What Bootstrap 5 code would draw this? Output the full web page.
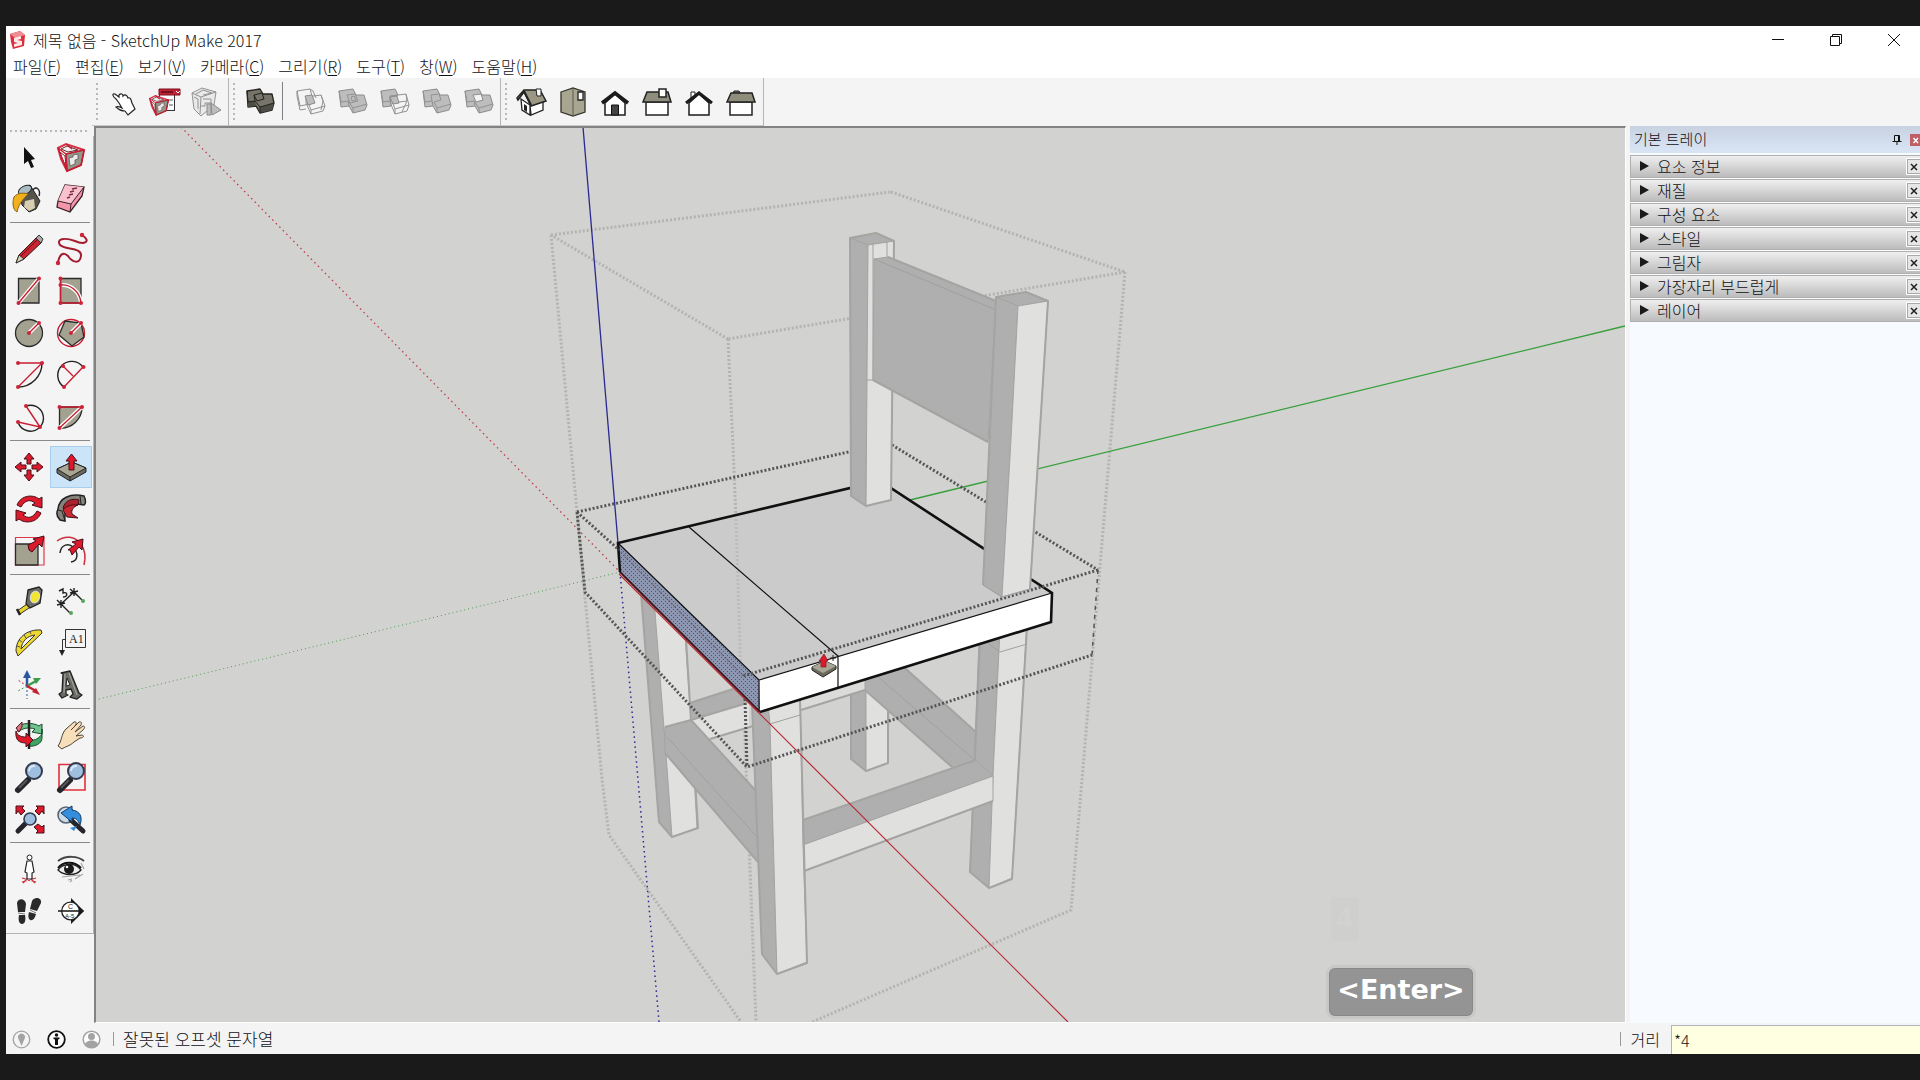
<!DOCTYPE html>
<html lang="ko">
<head>
<meta charset="utf-8">
<meta name="viewport" content="width=device-width, initial-scale=1">
<title>제목 없음 - SketchUp Make 2017</title>
<link href="https://cdn.jsdelivr.net/npm/bootstrap@5.3.0/dist/css/bootstrap.min.css" rel="stylesheet">
<style>
  body { background: #1a1a1a; font-family: "Noto Sans CJK KR", "Noto Sans", sans-serif; font-size: 16px; font-weight: 300; line-height: 24px; color: #101014; padding: 26px 0 26px 6px; }
  button { font: inherit; color: inherit; background: none; border: 0; padding: 0; }
  svg { display: block; }
  .app-window { background: #f4f4f4; }
  .title-row { height: 28px; padding-left: 3px; gap: 6px; }
  .win-btn { width: 58px; height: 28px; }
  .win-btn svg { margin: auto; }
  .win-controls { margin-right: -3px; }
  .menu-row { height: 24px; }
  .menu-row button { padding: 0 7px; }
  .menu-row u { text-underline-offset: 2px; }
  .tool-row { height: 48px; padding-left: 86px; }
  .tool-group { border-right: 1px solid #b4b4b4; border-bottom: 1px solid #c9c9c9; padding: 3px 1px 0 9px; position: relative; }
  .tool-group::before { content: ""; position: absolute; left: 4px; top: 5px; bottom: 3px; width: 2px; background: repeating-linear-gradient(#b9b9b9 0 2px, transparent 2px 5px); }
  .tool-btn { width: 42px; height: 42px; flex: none; }
  .tool-btn.is-on { background: #cce4f8; outline: 1px solid #a9cdec; outline-offset: -1px; }
  .v-rule { width: 7px; height: 38px; border-left: 1px solid #808080; margin: 1px 0 0 2px; }
  .side-tools { width: 88px; padding-top: 10px; position: relative; }
  .side-box { padding: 0 1px 1px 2px; border-right: 1px solid #b4b4b4; border-bottom: 1px solid #b4b4b4; }
  .side-tools::before { content: ""; position: absolute; left: 4px; right: 4px; top: 4px; height: 2px; background: repeating-linear-gradient(90deg, #b9b9b9 0 2px, transparent 2px 5px); }
  .h-rule { width: 80px; height: 8px; margin-left: 2px; background: linear-gradient(#8a8a8a, #8a8a8a) 0 2px / 100% 1px no-repeat; }
  .viewport3d { background: #d2d2d0; border: 1px solid #fff; border-left: 2px solid #828282; border-top: 2px solid #828282; position: relative; }
  .viewport3d > svg { position: absolute; inset: 0; width: 100%; height: 100%; }
  .key-pop { position: absolute; right: 153px; bottom: 7px; height: 46px; width: 142px; line-height: 42px; border-radius: 5px; background: #949494; box-shadow: 0 0 0 1px #888, 0 0 0 4px #c8c8c7; color: #fff; font-family: "DejaVu Sans", sans-serif; font-weight: 700; font-size: 27px; text-align: center; }
  .key-ghost { position: absolute; right: 266px; bottom: 81px; width: 28px; height: 44px; line-height: 44px; border-radius: 3px; background: #cfcfcd; color: #d2d2d0; font-family: "DejaVu Sans", sans-serif; font-weight: 700; font-size: 26px; text-align: center; }
  .tray { width: 290px; margin-left: 4px; background: #f7faff; }
  .tray-head { height: 27px; padding-left: 4px; font-size: 15px; background: linear-gradient(#c8d2e1, #d9e5f5); margin-bottom: 2px; }
  .tray-head span { padding-bottom: 1px; }
  .pin-btn { width: 12px; margin-right: 7px; }
  .tray-x { width: 12px; height: 12px; margin-right: -2px; background: #c06066; }
  .tray-item { height: 23px; margin-bottom: 1px; padding-left: 9px; border: 1px solid #b0b0b0; border-right: 0; background: linear-gradient(#efefef, #bcbcbc); }
  .tray-item > button:first-child { height: 20px; line-height: 20px; }
  .item-arrow { width: 17px; height: 10px; }
  .item-x { width: 17px; height: 17px; margin: 2px -3px 0 0; border: 1px solid #fff; outline: 1px solid #a9a9a9; outline-offset: -2px; background: #e6e6e6; }
  .status-row { height: 31px; font-size: 17px; padding: 1px 0 0 6px; }
  .status-row .btn-ico { width: 19px; height: 19px; margin-right: 16px; }
  .status-rule { width: 1px; height: 14px; background: #999; }
  .status-rule.at-left { margin: 0 9px 0 -4px; }
  .measure-box { width: 249px; height: 29px; border: 1px solid #b0b4bc; border-right: 0; border-bottom: 0; background: #ffffe1; border-radius: 0; padding: 0 2px; font-size: 16px; font-weight: 300; color: #111; outline: 0; }
  .measure-lab { font-size: 16px; margin: 0 11px 0 10px; }
  .r { fill: none; stroke: #c81e32; stroke-width: 1.4; }
  .k { fill: none; stroke: #222; stroke-width: 1.4; }
  .rd { fill: #cc2336; }
  .arw { fill: #dd1a2b; stroke: #46101a; stroke-width: 1; }
  .tan { fill: #a3a18f; stroke: #2a2a2a; stroke-width: 1.3; }
  .gs { fill: #bdbdbd; stroke: #8c8c8c; stroke-width: 1; stroke-linejoin: round; }
  .gl { fill: none; stroke: #929292; stroke-width: 1; stroke-linejoin: round; }
  .md { fill: #afafaf; stroke: #a4a4a2; stroke-width: 1; stroke-linejoin: round; }
  .ml { fill: #e0e0df; stroke: #a4a4a2; stroke-width: 1; stroke-linejoin: round; }
  .sil { fill: none; stroke: #a4a4a2; stroke-width: 2; stroke-linejoin: round; }
  .thin { fill: none; stroke: #a0a09e; stroke-width: 1; }
  .bbo { fill: none; stroke: #b3b3b1; stroke-width: 3; stroke-dasharray: 2 2; }
  .bbi { fill: none; stroke: #555; stroke-width: 3; stroke-dasharray: 2 2; }
</style>
<script src="https://cdn.jsdelivr.net/npm/bootstrap@5.3.0/dist/js/bootstrap.bundle.min.js"></script>
</head>
<body class="vh-100 overflow-hidden">
<svg width="0" height="0" class="position-absolute" aria-hidden="true">
  <defs>
    <symbol id="cube-red" viewBox="0 0 42 42">
      <path d="M8 12L16 8L34 14L31 29L17 35L11 23Z" fill="#fff" stroke="#d93246" stroke-width="2"/>
      <path d="M16 18L34 14L31 29L17 35Z" fill="#98958a" stroke="#4b1a22" stroke-width="1"/>
      <path d="M11 13L17 10L28 14L18 16Z" fill="#efefef" stroke="#6a2a30"/>
      <path d="M10 16L15 20L16 31L12 22Z" fill="#fff" stroke="#6a2a30"/>
      <path d="M8 12L16 18L34 14M16 18L17 35M16 8L22 13" class="r"/>
      <path d="M8 12L17 35L31 29L34 14" class="r"/>
      <path d="M19 22l4-1v-2l5-1v5l-3 1v4l-5 2z" fill="#e9e9e9" stroke="#5b5b5b" stroke-width=".8"/>
    </symbol>
    <symbol id="loupe" viewBox="0 0 42 42">
      <path d="M10 34L20 24" stroke="#26262a" stroke-width="6" stroke-linecap="round"/><path d="M11 32L19 24" stroke="#55555b" stroke-width="2"/>
      <circle cx="26" cy="15" r="8" fill="#9fbfe0" stroke="#333a4c" stroke-width="2"/><path d="M21 15a5 5 0 0 1 6-5" fill="none" stroke="#dce9f6" stroke-width="2"/>
    </symbol>
  </defs>
</svg>

<div class="app-window h-100 d-flex flex-column">
  <header class="bg-white">
    <div class="title-row d-flex align-items-center">
      <svg width="18" height="20" viewBox="0 0 18 20" aria-hidden="true"><path d="M1 4L11 1L16 5L15 16L4 19L2 12Z" fill="#dd2f3c"/><path d="M1 4L11 1L16 5L6 8Z" fill="#ee8d92"/><path d="M5 8L12 6V9L8 10L13 11V15L5 17V14L9 13L5 12Z" fill="#fff" opacity=".9"/></svg>
      <span>제목 없음 - SketchUp Make 2017</span>
      <div class="win-controls ms-auto d-flex">
        <button class="win-btn" aria-label="최소화"><svg width="12" height="12"><path d="M0 5.500H12" stroke="#111"/></svg></button>
        <button class="win-btn" aria-label="이전 크기로"><svg width="12" height="12"><path d="M.5 2.500H9.500V11.500H.5ZM2.500 2.500V.5H11.500V9.500H9.500" fill="none" stroke="#111"/></svg></button>
        <button class="win-btn" aria-label="닫기"><svg width="12" height="12"><path d="M0 0L12 12M12 0L0 12" stroke="#111"/></svg></button>
      </div>
    </div>
    <nav class="menu-row d-flex">
      <button>파일(<u>F</u>)</button><button>편집(<u>E</u>)</button><button>보기(<u>V</u>)</button><button>카메라(<u>C</u>)</button><button>그리기(<u>R</u>)</button><button>도구(<u>T</u>)</button><button>창(<u>W</u>)</button><button>도움말(<u>H</u>)</button>
    </nav>
  </header>

  <div class="tool-row d-flex" role="toolbar">
    <div class="tool-group d-flex">
      <button class="tool-btn" aria-label="손"><svg width="42" height="42"><path d="M15 18C11 15 11 12 14 13L18 16V14C20 12 22 13 22 15C24 13 26 14 27 17C29 16 30 18 31 22L34 28L27 34L24 30C20 30 17 28 15 26C17 25 19 26 21 27L18 22Z" fill="#fff" stroke="#222" stroke-width="1.200"/></svg></button>
      <button class="tool-btn" aria-label="3D 웨어하우스"><svg width="42" height="42"><rect x="16.500" y="8.500" width="15" height="21" fill="#fff" stroke="#333"/><path d="M16 8H37V14H16Z" fill="#c12236" stroke="#7d1020"/><path d="M18 11H30" stroke="#5c0b18" stroke-width="1.500"/><path d="M33 10l2 2l2-2" stroke="#fff" fill="none"/><path d="M25 19h5M26 24h4" stroke="#555"/><use href="#cube-red" x="1" y="9" width="30" height="30"/></svg></button>
      <button class="tool-btn" aria-label="확장 웨어하우스"><svg width="42" height="42"><g class="gl"><path d="M7 12L17 7L31 11L29 24L16 35L9 28Z" fill="#e9e9e9"/><path d="M7 12L16 16L31 11M16 16L15 33M11 13L18 9L27 12L18 14M9 16L13 18L13 28M18 18H26V22H20V25H15"/></g><path d="M22 23H26V34H22ZM26 22L36 29L27 34Z" class="gs"/></svg></button>
    </div>
    <div class="tool-group d-flex">
      <button class="tool-btn" aria-label="외부 셸"><svg width="42" height="42"><path d="M9 10L22 8L25 13L34 13L36 22L34 29L22 32L18 25L10 26Z" fill="#77756a" stroke="#23231f" stroke-width="1.300" stroke-linejoin="round"/><path d="M10 21L17 20L18 25L10 26ZM22 26L36 22L34 29L22 32Z" fill="#4e4d45"/><path d="M9 10L10 21L17 20M16 14L24 12L26 18L19 20ZM17 20L22 26L36 22M22 26V32M16 14L17 20" fill="none" stroke="#23231f"/></svg></button>
      <span class="v-rule"></span>
      <button class="tool-btn" aria-label="교차"><svg width="42" height="42"><g class="gl"><path d="M8 10L21 8L25 22L11 25ZM8 10V15L11 29L17 28M21 8L24 10L27 17M17 16L32 14L36 25L22 29ZM36 25L34 30L22 33V29M17 16V22L22 33M32 14L34 20L32 29"/></g><path d="M16 15L23 14L26 22L19 24Z" class="gs"/></svg></button>
      <button class="tool-btn" aria-label="결합"><svg width="42" height="42"><path d="M8 10L22 8L25 14L33 14L36 24L34 29L22 32L18 25L10 26Z" class="gs"/><path d="M8 10L10 21L17 20M17 20L22 27L36 23M22 27V32M16 14L24 13L27 20L19 22ZM20 16L23 15L25 19L21 20ZM17 20L18 25" class="gl"/></svg></button>
      <button class="tool-btn" aria-label="빼기"><svg width="42" height="42"><path d="M8 10L22 8L25 14L17 16L18 25L10 26Z" class="gs"/><path d="M8 10L10 21L17 20M17 15L33 13L36 24L22 28ZM22 28V33L34 30L36 24M17 15V21L22 33M33 13L34 20L29 31M18 22L34 20" class="gl"/><path d="M17 16L24 15L26 22L20 23Z" class="gs"/></svg></button>
      <button class="tool-btn" aria-label="자르기"><svg width="42" height="42"><path d="M8 10L22 8L25 14L33 14L36 24L34 29L22 32L18 25L10 26Z" class="gs"/><path d="M8 10L10 21L17 20M16 14L24 13L26 19L19 21L22 27L36 23M22 27V32M16 14L17 20L18 25" class="gl"/></svg></button>
      <button class="tool-btn" aria-label="분할"><svg width="42" height="42"><path d="M8 10L22 8L25 14L33 14L36 24L34 29L22 32L18 25L10 26Z" class="gs"/><path d="M8 10L10 21L17 20L22 27L36 23M22 27V32M17 20L18 25" class="gl"/><path d="M16 14L24 13L26 19L19 21Z" fill="#f4f4f4" stroke="#8c8c8c"/></svg></button>
    </div>
    <div class="tool-group d-flex">
      <button class="tool-btn" aria-label="아이소"><svg width="42" height="42"><path d="M11 18L20 24V34L12 29ZM20 24L33 20V29L21 34Z" fill="#fff" stroke="#222" stroke-width="1.300"/><path d="M7 17L14 9L30 9L36 20L21 25L14 11L8 19Z" fill="#9a9885" stroke="#222" stroke-width="1.500"/><path d="M14 10L21 24" stroke="#222" stroke-width="2"/><path d="M26 8H31V15H27Z" fill="#fff" stroke="#222"/><path d="M14 23L17 25V31L14 29Z" fill="#222"/></svg></button>
      <button class="tool-btn" aria-label="위"><svg width="42" height="42"><path d="M9 11L21 7L33 11V31L21 35L9 31Z" fill="#a8a690" stroke="#33332c" stroke-width="1.300"/><path d="M21 8V35" stroke="#5a5a4d"/><path d="M26 11H31V19H26Z" fill="#fff" stroke="#222" stroke-width="1.300"/></svg></button>
      <button class="tool-btn" aria-label="앞"><svg width="42" height="42"><path d="M11 22V34H31V22L21 13Z" fill="#fff" stroke="#1b1b1b" stroke-width="1.500"/><path d="M8 22L21 12L34 22" fill="none" stroke="#1b1b1b" stroke-width="3.500"/><path d="M17.500 24H24.500V34H17.500Z" fill="#444" stroke="#111"/></svg></button>
      <button class="tool-btn" aria-label="오른쪽"><svg width="42" height="42"><path d="M10 21H32V34H10Z" fill="#fff" stroke="#222" stroke-width="1.500"/><path d="M11 11H32L35 21H7Z" fill="#8f8d7c" stroke="#222" stroke-width="1.500"/><path d="M23 8H30V16H23Z" fill="#fff" stroke="#222" stroke-width="1.500"/></svg></button>
      <button class="tool-btn" aria-label="뒤"><svg width="42" height="42"><path d="M13 18V11H17V15" fill="#fff" stroke="#222"/><path d="M11 22V34H31V22L21 13Z" fill="#fff" stroke="#1b1b1b" stroke-width="1.500"/><path d="M8 22L21 12L34 22" fill="none" stroke="#1b1b1b" stroke-width="3"/></svg></button>
      <button class="tool-btn" aria-label="왼쪽"><svg width="42" height="42"><path d="M13 12L14 10H19L20 12" fill="#777" stroke="#222"/><path d="M10 21H32V34H10Z" fill="#fff" stroke="#222" stroke-width="1.500"/><path d="M11 12H32L35 21H7Z" fill="#8f8d7c" stroke="#222" stroke-width="1.500"/></svg></button>
    </div>
  </div>

  <div class="flex-grow-1 d-flex overflow-hidden">
    <aside class="side-tools flex-shrink-0">
      <div class="side-box d-flex flex-wrap" role="toolbar">
        <button class="tool-btn" aria-label="선택"><svg width="42" height="42"><path d="M16 11V28L20 25L23 32L26 31L23 24L27 23Z" fill="#111"/></svg></button>
        <button class="tool-btn" aria-label="구성 요소 만들기"><svg width="42" height="42"><use href="#cube-red" width="42" height="42"/></svg></button>
        <button class="tool-btn" aria-label="페인트통"><svg width="42" height="42"><path d="M11 13L22 7L32 23L28 31L21 34L14 27Z" fill="#55534b" stroke="#222"/><ellipse cx="17" cy="12" rx="7" ry="4" transform="rotate(-25 17 12)" fill="#a9bcc0" stroke="#222"/><path d="M17 23L26 21L27 30L21 33L16 29Z" fill="#d8cfb2"/><path d="M25 12C28 7 33 12 31 18" class="k"/><path d="M6 19C10 14 17 15 20 16C17 20 11 24 9 34C5 32 4 25 6 19Z" fill="#f2b01e" stroke="#8a6414"/></svg></button>
        <button class="tool-btn" aria-label="지우개"><svg width="42" height="42"><path d="M15 7L34 9L32 18L20 34L7 29L8 23Z" fill="#f595ac" stroke="#3a2227" stroke-width="1.300"/><path d="M15 7L34 9L21 26L8 23Z" fill="#f9c0cd"/><path d="M8 23L21 26L34 9M21 26L20 34" fill="none" stroke="#3a2227"/><path d="M17 20l3-1M19 17l4-1M20 14l4-1M22 11l5-1" stroke="#7c2c42" stroke-width="1.500"/></svg></button>
        <span class="h-rule"></span>
        <button class="tool-btn" aria-label="선"><svg width="42" height="42"><path d="M8 35L11 27L28 10L34 14L16 31Z" fill="#c9242f" stroke="#33181b"/><path d="M8 35L11 27L16 31Z" fill="#d8d2b4" stroke="#333"/><path d="M28 10L31 7L35 11L33 15Z" fill="#aaa" stroke="#333"/><path d="M13 28L29 12" stroke="#6d0f19"/></svg></button>
        <button class="tool-btn" aria-label="자유곡선"><svg width="42" height="42"><path d="M32 7C42 14 34 17 25 13C14 9 6 11 10 17C15 22 32 19 31 28C30 37 22 34 18 28C13 23 9 27 8 35" fill="none" stroke="#a31c2e" stroke-width="2"/><circle cx="32" cy="7" r="2.200" class="rd"/><circle cx="8" cy="35" r="2.200" class="rd"/></svg></button>
        <button class="tool-btn" aria-label="직사각형"><svg width="42" height="42"><path d="M10.500 8.500H31V33H10.500Z" class="tan"/><path d="M10.500 33L31 8.500" stroke="#fff" stroke-width="4"/><path d="M10.500 33L31 8.500" class="r"/><circle cx="10.500" cy="33" r="2" class="rd"/><circle cx="31" cy="8.500" r="2" class="rd"/></svg></button>
        <button class="tool-btn" aria-label="회전된 직사각형"><svg width="42" height="42"><path d="M10.500 8.500H31V33H10.500Z" class="tan"/><path d="M10.500 15C21 14 30 22 31 33" stroke="#fff" stroke-width="4" fill="none"/><path d="M10.500 8.500V33H31C30 22 21 14 10.500 15" class="r"/><circle cx="10.500" cy="8.500" r="2" class="rd"/><circle cx="10.500" cy="15" r="2" class="rd"/><circle cx="10.500" cy="33" r="2" class="rd"/><circle cx="31" cy="33" r="2" class="rd"/></svg></button>
        <button class="tool-btn" aria-label="원"><svg width="42" height="42"><circle cx="21" cy="21" r="13.500" class="tan"/><path d="M21 21L31 11" stroke="#fff" stroke-width="4"/><path d="M21 21L31 11" class="r"/><circle cx="21" cy="21" r="2" class="rd"/><circle cx="31" cy="11" r="2" class="rd"/></svg></button>
        <button class="tool-btn" aria-label="다각형"><svg width="42" height="42"><circle cx="21" cy="21" r="13.500" class="r"/><path d="M31 11L34 25L22 34L9 23L15 9Z" class="tan"/><path d="M21 21L31 11" stroke="#fff" stroke-width="4"/><path d="M21 21L31 11" class="r"/><circle cx="21" cy="21" r="2" class="rd"/><circle cx="31" cy="11" r="2" class="rd"/></svg></button>
        <button class="tool-btn" aria-label="호"><svg width="42" height="42"><path d="M34 9A24 24 0 0 1 10 33" class="k"/><path d="M10 9H34L10 33" class="r"/><circle cx="10" cy="9" r="2" class="rd"/><circle cx="34" cy="9" r="2" class="rd"/><circle cx="10" cy="33" r="2" class="rd"/></svg></button>
        <button class="tool-btn" aria-label="2점 호"><svg width="42" height="42"><path d="M14 33A14 14 0 1 1 33 13" class="k"/><path d="M14 33L33 13M13 12L23 22" class="r"/><circle cx="13" cy="12" r="2" class="rd"/><circle cx="33.500" cy="13" r="2" class="rd"/><circle cx="14" cy="33" r="2" class="rd"/></svg></button>
        <button class="tool-btn" aria-label="3점 호"><svg width="42" height="42"><path d="M18 10A13 13 0 1 1 10 26" class="k"/><path d="M18 10L32 31L10 26" class="r"/><circle cx="18" cy="10" r="2" class="rd"/><circle cx="32" cy="31" r="2" class="rd"/><circle cx="10" cy="26" r="2" class="rd"/></svg></button>
        <button class="tool-btn" aria-label="파이"><svg width="42" height="42"><path d="M9.500 11H32A21 21 0 0 1 9.500 32Z" class="tan"/><path d="M9.500 32L32 11" stroke="#fff" stroke-width="4"/><path d="M9.500 32L32 11H9.500" class="r"/><circle cx="9.500" cy="11" r="2" class="rd"/><circle cx="32" cy="11" r="2" class="rd"/><circle cx="9.500" cy="32" r="2" class="rd"/></svg></button>
        <span class="h-rule"></span>
        <button class="tool-btn" aria-label="이동"><svg width="42" height="42"><path d="M21 7L26 13H23V18H19V13H16ZM21 35L26 29H23V24H19V29H16ZM7 21L13 16V19H18V23H13V26ZM35 21L29 16V19H24V23H29V26Z" class="arw"/></svg></button>
        <button class="tool-btn is-on" aria-label="밀기/끌기" aria-pressed="true"><svg width="42" height="42"><path d="M7 23L22 16L36 22V26L20 35L7 27Z" fill="#6b6a60" stroke="#222"/><path d="M7 23L22 16L36 22L20 31Z" fill="#a8a695" stroke="#222"/><path d="M20 31V35" stroke="#222"/><path d="M21.500 8L27 15H24V24H19V15H16Z" class="arw"/></svg></button>
        <button class="tool-btn" aria-label="회전"><svg width="42" height="42"><path d="M9 17C13 7 25 6 31 11L34 9L34 20L24 17L27 15C22 11 17 12 13 19ZM33 25C29 35 17 36 11 31L8 33L8 22L18 25L15 27C20 31 25 30 29 23Z" class="arw"/></svg></button>
        <button class="tool-btn" aria-label="따라가기"><svg width="42" height="42"><path d="M8 21C9 10 20 5 34 8C36 12 36 16 34 17L27 16C18 17 14 23 15 33L10 32C7 29 6 25 8 21Z" fill="#85837a" stroke="#222" stroke-width="1.500"/><path d="M13 20C15 12 23 10 29 12L28 17L19 19L17 24Z" fill="#aa222e" stroke="#42121a"/><path d="M13 22L17 29L28 30L22 26C21 22 23 19 28 17C20 16 15 19 13 22Z" fill="#cc2834" stroke="#42121a"/><path d="M8 22L12 23L15 33M30 8L31 16" fill="none" stroke="#222"/></svg></button>
        <button class="tool-btn" aria-label="배율"><svg width="42" height="42"><path d="M7.500 7.500H36V35H7.500Z" fill="none" stroke="#dd3a49" stroke-width="1.200"/><path d="M7.500 14H30V35H7.500Z" class="tan"/><path d="M36 6L34 17L31 14L24 22L21 20L20 15L28 11L25 9Z" class="arw"/></svg></button>
        <button class="tool-btn" aria-label="오프셋"><svg width="42" height="42"><path d="M7 11C15 5 25 6 31 14C35 20 36 27 34 35" fill="none" stroke="#c9303f" stroke-width="1.500"/><path d="M10 23C11 14 19 13 23 17C29 23 28 31 21 32" class="k"/><path d="M33 9L32 20L29 17L22 25L20 20L18 20L26 14L22 12Z" class="arw"/></svg></button>
        <span class="h-rule"></span>
        <button class="tool-btn" aria-label="줄자"><svg width="42" height="42"><path d="M9 31L22 22L24 26L12 34Z" fill="#e8d32c" stroke="#333"/><path d="M9 29L12 35" stroke="#222" stroke-width="2.500"/><path d="M20 10L31 7L34 10L32 23L22 28L18 24Z" fill="#6c6c68" stroke="#222" stroke-width="1.300"/><ellipse cx="27" cy="17" rx="4.500" ry="6" transform="rotate(20 27 17)" fill="#f1e52f" stroke="#ddd"/></svg></button>
        <button class="tool-btn" aria-label="치수"><svg width="42" height="42"><path d="M11 24L24 12L33 21M11 24L20 33M20 9L28 16M24 8V16M7 20L15 28M11 20V28M20 13L28 11M7 25L15 23" class="k" stroke-width="1"/><circle cx="33" cy="21" r="2" fill="#58a45b"/><circle cx="21" cy="33" r="2" fill="#58a45b"/><path d="M9 11L13 9V13C18 11 18 17 13 17" class="k"/></svg></button>
        <button class="tool-btn" aria-label="각도기"><svg width="42" height="42"><path d="M10 34L8 29C8 16 19 7 33 8L34 11Z" fill="#eed72f" stroke="#333" stroke-linejoin="round"/><path d="M13 27C14 19 19 14 27 13Z" fill="#f4f4f4" stroke="#333"/><path d="M9 24l3 1M11 18l3 2M16 13l2 3M22 10l1 2" stroke="#555"/></svg></button>
        <button class="tool-btn" aria-label="텍스트"><svg width="42" height="42"><path d="M15.500 7.500H35.500V25.500H15.500ZM15.500 17.500H12.500V30" fill="none" stroke="#333"/><path d="M9 28H15L12 34Z" fill="#222"/><text x="19" y="21" font-family="Liberation Serif, serif" font-size="12" font-weight="400" fill="#222">A1</text></svg></button>
        <button class="tool-btn" aria-label="축"><svg width="42" height="42"><path d="M19 22V12" stroke="#2b57a0" stroke-width="2.500"/><path d="M15 14L19 6L23 14Z" fill="#2b57a0"/><path d="M19 22L28 17" stroke="#3f9b4c" stroke-width="2.500"/><path d="M25 14L33 14L28 20Z" fill="#3f9b4c"/><path d="M19 22L28 27" stroke="#c5222f" stroke-width="2.500"/><path d="M24 28L32 31L28 24Z" fill="#c5222f"/><path d="M19 22L10 27" stroke="#3f9b4c" stroke-dasharray="2 2"/><path d="M19 22V35" stroke="#2b57a0" stroke-dasharray="2 2"/><path d="M19 22L10 16" stroke="#c5222f" stroke-dasharray="2 2"/></svg></button>
        <button class="tool-btn" aria-label="3D 텍스트"><svg width="42" height="42"><path d="M9 30L12 28L13 10L11 9L20 7L29 29L32 31L27 35L20 33L23 30L21 25L16 26L16 30L18 31L12 34Z" fill="#6d6c64" stroke="#222" stroke-width="1.300" stroke-linejoin="round"/><path d="M17 14L20 21L16 22Z" fill="#f4f4f4" stroke="#222"/><path d="M15 10L14 29M19 9L27 31" stroke="#aaa" stroke-width="1"/></svg></button>
        <span class="h-rule"></span>
        <button class="tool-btn" aria-label="궤도"><svg width="42" height="42"><path d="M9 13C13 9 25 8 31 12L34 10V20L24 18L27 15C20 13 15 14 10 18Z" fill="#6fc48e" stroke="#1d4c30"/><path d="M34 15V24C34 30 26 33 21 32L22 26C27 27 31 24 34 20Z" fill="#3fa565" stroke="#1d4c30"/><path d="M8 14L14 8V13L11 18Z" fill="#d8727c" stroke="#5c1a22"/><path d="M21 6V35" stroke="#222" stroke-width="2.500"/><path d="M8 17C9 22 14 23 18 23V19L25 26L18 33V29C11 29 7 26 8 17Z" class="arw"/></svg></button>
        <button class="tool-btn" aria-label="팬"><svg width="42" height="42"><path d="M8 32C12 27 11 20 16 15L24 8C26 7 27 9 25 12L21 16L29 8C31 7 32 9 31 11L25 18L33 12C35 12 35 14 33 16L26 22L32 21C35 22 33 24 30 24L24 28C20 32 14 33 12 35Z" fill="#f6dfb9" stroke="#4d4233" stroke-width="1"/></svg></button>
        <button class="tool-btn" aria-label="확대/축소"><svg width="42" height="42"><use href="#loupe" width="42" height="42"/></svg></button>
        <button class="tool-btn" aria-label="확대/축소 창"><svg width="42" height="42"><path d="M9 8.500H35V34H9Z" fill="none" stroke="#e0303c" stroke-width="1.600"/><use href="#loupe" width="42" height="42"/></svg></button>
        <button class="tool-btn" aria-label="범위 확대/축소"><svg width="42" height="42"><path d="M10 33L17 26" stroke="#26262a" stroke-width="5" stroke-linecap="round"/><circle cx="22" cy="21" r="6" fill="#9fbfe0" stroke="#333a4c" stroke-width="1.600"/><path d="M8 8H16L14 10L17 13L13 17L10 13L8 16ZM36 8H28L30 10L27 13L31 17L34 13L36 16ZM36 35H28L30 33L26 29L30 26L34 29L36 27Z" class="arw"/></svg></button>
        <button class="tool-btn" aria-label="이전"><svg width="42" height="42"><circle cx="16" cy="17" r="8" fill="#c9dae8" stroke="#5b6775" stroke-width="1.600"/><path d="M21 22L33 33" stroke="#26262a" stroke-width="5" stroke-linecap="round"/><path d="M11 15L22 8V12C30 13 33 19 30 27C28 22 26 20 22 20V24Z" fill="#358dde" stroke="#133d68"/><path d="M20 30L27 28L24 33Z" fill="#358dde"/></svg></button>
        <span class="h-rule"></span>
        <button class="tool-btn" aria-label="카메라 위치"><svg width="42" height="42"><path d="M15 35L21 29L27 35M14 30L28 34M28 30L14 34" stroke="#d42b3a" fill="none" stroke-width="1.300"/><circle cx="21.500" cy="9.500" r="2.500" fill="#fff" stroke="#222"/><path d="M19 13H24L26 24L24 25V31H19V25L17 24Z" fill="#fff" stroke="#222" stroke-width="1.200"/></svg></button>
        <button class="tool-btn" aria-label="둘러보기"><svg width="42" height="42"><path d="M8 13C16 7 28 8 34 13" fill="none" stroke="#444" stroke-width="2"/><path d="M8 22C13 15 25 14 31 22C26 28 14 28 8 22Z" fill="#ededed" stroke="#222" stroke-width="1.300"/><path d="M8 20C13 13 25 13 31 20" fill="none" stroke="#111" stroke-width="2"/><circle cx="19" cy="21" r="5" fill="#1a1a1a"/><circle cx="17" cy="19" r="1.300" fill="#fff"/><path d="M12 29L30 27M18 32L22 31M25 31L33 26M20 34l2-2M31 15l3 6" stroke="#a5a5a5" stroke-width="1.200"/></svg></button>
        <button class="tool-btn" aria-label="이동 보기"><svg width="42" height="42"><path d="M9 13C10 8 17 8 18 14L17 22H10ZM11 25H17C18 30 17 34 14 34C11 34 10 30 11 25ZM22 19L24 11C27 6 34 8 33 13L29 21ZM21 22L28 24C27 28 25 31 22 30C20 28 20 26 21 22Z" fill="#2a2a2a"/><path d="M10 23L17 24M22 20L28 23" stroke="#777" stroke-width="1"/></svg></button>
        <button class="tool-btn" aria-label="단면"><svg width="42" height="42"><path d="M21 8L34 21L21 34V30L30 21L21 12Z" fill="#1a1a1a"/><circle cx="20.500" cy="21" r="8.800" fill="#fff" stroke="#222" stroke-width="1.300"/><path d="M8 21H33" stroke="#222" stroke-width="1.600"/><path d="M29 17L34 21L29 25Z" fill="#1a1a1a"/><text x="18" y="19" font-family="Liberation Sans, sans-serif" font-size="7" fill="#222">C</text><text x="15" y="28" font-family="Liberation Sans, sans-serif" font-size="6" fill="#222">A-5</text></svg></button>
      </div>
    </aside>

    <main class="viewport3d flex-grow-1 overflow-hidden">
      <svg viewBox="97 129 1529 894" preserveAspectRatio="xMinYMin slice" role="img" aria-label="의자 모델">
        <defs><pattern id="dots" width="4" height="4" patternUnits="userSpaceOnUse"><rect width="4" height="4" fill="#8e97b2"/><rect width="1" height="1" fill="#4a5379"/><rect x="2" y="2" width="1" height="1" fill="#4a5379"/></pattern></defs>
        <!-- outer bounding box -->
        <g class="bbo">
          <path d="M552 236L892 193"/><path d="M892 193L1126 273"/><path d="M1126 273L729 340"/><path d="M729 340L552 236"/>
          <path d="M552 236L578 513L603 780L610 836L742 1023"/><path d="M729 340L734 447L742 640L757 1023"/><path d="M1126 273L1105 520L1072 911L813 1023"/>
        </g>
        <!-- axes -->
        <g fill="none" stroke-width="1">
          <path d="M584 128L619 544" stroke="#2a2a93" stroke-width="1.300"/>
          <path d="M621 573L660 1023" stroke="#2a2a93" stroke-width="1.500" stroke-dasharray="1.500 3.500"/>
          <path d="M182 128L621 573" stroke="#c23c4a" stroke-width="1.300" stroke-dasharray="1.500 3.500"/>
          <path d="M96 701L621 573" stroke="#4d9a52" stroke-dasharray="1 3"/>
          <path d="M911 501L1626 327" stroke="#37a03c" stroke-width="1.300"/>
        </g>
        <!-- back leg -->
        <path class="md" d="M852 690L867 685V772L852 760Z"/><path class="ml" d="M867 685L890 700L889 764L867 772Z"/>
        <path class="sil" d="M852 690V760L867 772L889 764V700"/>
        <!-- right side rail -->
        <path d="M802 690L866 665V691L802 711Z" fill="#dbdbda"/><path class="sil" d="M802 711L866 691"/>
        <path class="md" d="M866 665L900 665L978 734L994 777L953 768L866 691Z"/>
        <path class="sil" d="M866 691L953 768M896 660L978 734"/><path class="thin" d="M870 670L994 777"/>
        <!-- back left leg -->
        <path class="md" d="M642 590L656 605L667 755L673 838L660 823Z"/>
        <path class="ml" d="M655 600L686 635L692 722L698 829L673 838L667 755Z"/>
        <path class="sil" d="M642 594L660 823L673 838L699 829L696 780M687 640L692 722"/>
        <!-- back rail -->
        <path class="md" d="M691 704L734 690L752 703L740 706L692 721Z"/>
        <path d="M692 721L750 703V728L711 740Z" fill="#e0e0df"/>
        <path class="sil" d="M691 704L734 690M692 721L745 705M711 740L754 727"/>
        <!-- left side rail -->
        <path class="md" d="M666 728L692 721L757 792L759 863L666 754Z"/>
        <path class="sil" d="M666 728L692 721L757 792M666 754L759 863"/><path class="thin" d="M668 738L758 838"/>
        <!-- front right leg -->
        <path class="md" d="M980 640L1001 630L994 777L990 889L971 873Z"/><path class="ml" d="M1001 630L1028 622L1013 879L990 889L994 777Z"/>
        <path class="sil" d="M981 640L971 873L990 889L1013 880L1028 628"/><path class="thin" d="M990 645L1001 653L1028 645"/>
        <!-- front rail -->
        <path class="md" d="M804 821L977 761L994 777L804 846Z"/><path class="ml" d="M804 846L994 777V802L805 872Z"/>
        <path class="sil" d="M804 821L977 761M805 872L994 802"/>
        <!-- front left leg -->
        <path class="md" d="M753 700L769 700L771 725L778 975L763 955Z"/><path class="ml" d="M769 705L801 695L804 846L808 963L778 975L771 725Z"/>
        <path class="sil" d="M753 704L763 955L778 975L808 964L801 700"/><path class="thin" d="M771 725L801 716"/>
        <!-- seat -->
        <path d="M619 544L881 482L1053 594L760 681Z" fill="#cbcbcb"/>
        <path d="M737 520L742 680" class="bbo" opacity=".6"/>
        <path d="M760 681L1053 594L1052 623L761 713Z" fill="#fff"/>
        <path d="M619 544L760 681L761 713L621 573Z" fill="url(#dots)"/>
        <path d="M690 528L839 657V688M760 681L1053 594M619 544L760 681V713" fill="none" stroke="#111" stroke-width="1.200"/>
        <path d="M621 573L619 544L881 482L1053 594L1052 623L761 713" fill="none" stroke="#111" stroke-width="2.600"/>
        <path d="M621 573L761 713" stroke="#421820" stroke-width="2"/>
        <path d="M620 575L761 715L1069 1023" stroke="#b92a35" stroke-width="1.200" fill="none"/>
        <!-- inner bounding box -->
        <g class="bbi">
          <path d="M578 513L881 446"/><path d="M893 446L1099 571"/><path d="M1099 571L744 677"/>
          <path d="M578 513L586 593L748 768L1093 656"/><path d="M578 513L619 550"/><path d="M746 700L748 768"/>
          <path d="M1099 571L1093 656" stroke-width="1.500" stroke-dasharray="4 5"/>
          <path d="M619 550L744 677" opacity=".5" stroke-width="2"/>
        </g>
        <!-- backrest and rear posts -->
        <path class="md" d="M851 239L877 234L895 242L869 246Z"/><path class="md" d="M851 239L869 246L867 507L852 497Z"/>
        <path class="ml" d="M869 246L895 242L892 501L867 507Z"/>
        <path class="sil" d="M852 497L851 239L877 234L895 242L892 501L867 507Z"/>
        <path class="thin" d="M874 245V381H868M888 243V258"/>
        <path class="md" d="M875 260L889 258L997 302L989 443L874 381Z"/>
        <path class="sil" d="M889 258L997 302M874 381L989 443"/><path class="thin" d="M875 260L995 310"/>
        <path class="md" d="M997 298L1027 293L1049 302L1019 307Z"/><path class="md" d="M997 298L1019 307L1012 440L1003 598L984 586L987 520Z"/>
        <path class="ml" d="M1019 307L1049 302L1031 590L1003 598L1012 440Z"/>
        <path class="sil" d="M984 586L987 520L997 298L1027 293L1049 302L1031 590"/><path class="thin" d="M984 586L1003 598L1031 590"/>
        <!-- push/pull cursor -->
        <path d="M813 668L826 662L837 667V670L824 678L813 671Z" fill="#6d6b5e" stroke="#222"/><path d="M813 668L826 662L837 667L824 674Z" fill="#a8a695"/>
        <path d="M825 655L829 662H827V668H822V662H820Z" fill="#dd1a2b" stroke="#8a1a22" stroke-width=".7"/>
        <path d="M831 659H837M834 656V662" stroke="#222"/>
      </svg>
      <span class="key-ghost">4</span>
      <span class="key-pop">&lt;Enter&gt;</span>
    </main>

    <aside class="tray flex-shrink-0 overflow-hidden">
      <div class="tray-head d-flex align-items-center">
        <span class="me-auto">기본 트레이</span>
        <button class="pin-btn" aria-label="고정"><svg width="12" height="12"><path d="M3.500 7V1.500H8.500V7M7.500 1V7M1.500 7.500H10.500M6 8V11" fill="none" stroke="#111"/></svg></button>
        <button class="tray-x" aria-label="트레이 닫기"><svg width="12" height="12"><path d="M3.500 4L8 9M8 4L3.500 9" stroke="#fff" stroke-width="1.500"/></svg></button>
      </div>
      <div class="tray-item d-flex"><button class="d-flex align-items-center me-auto"><svg class="item-arrow"><path d="M0 0L9 5L0 10Z" fill="#1a1a1a"/></svg>요소 정보</button><button class="item-x" aria-label="닫기"><svg width="15" height="15"><path d="M4 5L10 11M10 5L4 11" stroke="#222" stroke-width="1.500"/></svg></button></div>
      <div class="tray-item d-flex"><button class="d-flex align-items-center me-auto"><svg class="item-arrow"><path d="M0 0L9 5L0 10Z" fill="#1a1a1a"/></svg>재질</button><button class="item-x" aria-label="닫기"><svg width="15" height="15"><path d="M4 5L10 11M10 5L4 11" stroke="#222" stroke-width="1.500"/></svg></button></div>
      <div class="tray-item d-flex"><button class="d-flex align-items-center me-auto"><svg class="item-arrow"><path d="M0 0L9 5L0 10Z" fill="#1a1a1a"/></svg>구성 요소</button><button class="item-x" aria-label="닫기"><svg width="15" height="15"><path d="M4 5L10 11M10 5L4 11" stroke="#222" stroke-width="1.500"/></svg></button></div>
      <div class="tray-item d-flex"><button class="d-flex align-items-center me-auto"><svg class="item-arrow"><path d="M0 0L9 5L0 10Z" fill="#1a1a1a"/></svg>스타일</button><button class="item-x" aria-label="닫기"><svg width="15" height="15"><path d="M4 5L10 11M10 5L4 11" stroke="#222" stroke-width="1.500"/></svg></button></div>
      <div class="tray-item d-flex"><button class="d-flex align-items-center me-auto"><svg class="item-arrow"><path d="M0 0L9 5L0 10Z" fill="#1a1a1a"/></svg>그림자</button><button class="item-x" aria-label="닫기"><svg width="15" height="15"><path d="M4 5L10 11M10 5L4 11" stroke="#222" stroke-width="1.500"/></svg></button></div>
      <div class="tray-item d-flex"><button class="d-flex align-items-center me-auto"><svg class="item-arrow"><path d="M0 0L9 5L0 10Z" fill="#1a1a1a"/></svg>가장자리 부드럽게</button><button class="item-x" aria-label="닫기"><svg width="15" height="15"><path d="M4 5L10 11M10 5L4 11" stroke="#222" stroke-width="1.500"/></svg></button></div>
      <div class="tray-item d-flex"><button class="d-flex align-items-center me-auto"><svg class="item-arrow"><path d="M0 0L9 5L0 10Z" fill="#1a1a1a"/></svg>레이어</button><button class="item-x" aria-label="닫기"><svg width="15" height="15"><path d="M4 5L10 11M10 5L4 11" stroke="#222" stroke-width="1.500"/></svg></button></div>
    </aside>
  </div>

  <footer class="status-row d-flex align-items-center overflow-hidden">
    <button class="btn-ico" aria-label="위치"><svg width="19" height="19"><circle cx="9.500" cy="9.500" r="8.300" fill="none" stroke="#a3a3a3" stroke-width="1.300"/><path d="M9.500 16L6.500 9A3.500 3.500 0 1 1 12.500 9Z" fill="#a3a3a3"/></svg></button>
    <button class="btn-ico" aria-label="정보"><svg width="19" height="19"><circle cx="9.500" cy="9.500" r="8.300" fill="#fff" stroke="#111" stroke-width="1.800"/><circle cx="9.500" cy="5" r="1.700" fill="#111"/><path d="M6.500 7.500H12.500V9L11 9.500V15H8V9.500L6.500 9Z" fill="#111"/></svg></button>
    <button class="btn-ico" aria-label="사용자"><svg width="19" height="19"><circle cx="9.500" cy="9.500" r="8.300" fill="#fff" stroke="#a3a3a3" stroke-width="1.500"/><circle cx="9.500" cy="6.500" r="3.500" fill="#a3a3a3"/><path d="M3 15C3 9 16 9 16 15C12 19 7 19 3 15Z" fill="#a3a3a3"/></svg></button>
    <span class="status-rule at-left"></span>
    <span>잘못된 오프셋 문자열</span>
    <span class="status-rule ms-auto"></span>
    <label class="measure-lab" for="measure">거리</label>
    <input id="measure" class="measure-box align-self-end" type="text" value="*4">
  </footer>
</div>
</body>
</html>
